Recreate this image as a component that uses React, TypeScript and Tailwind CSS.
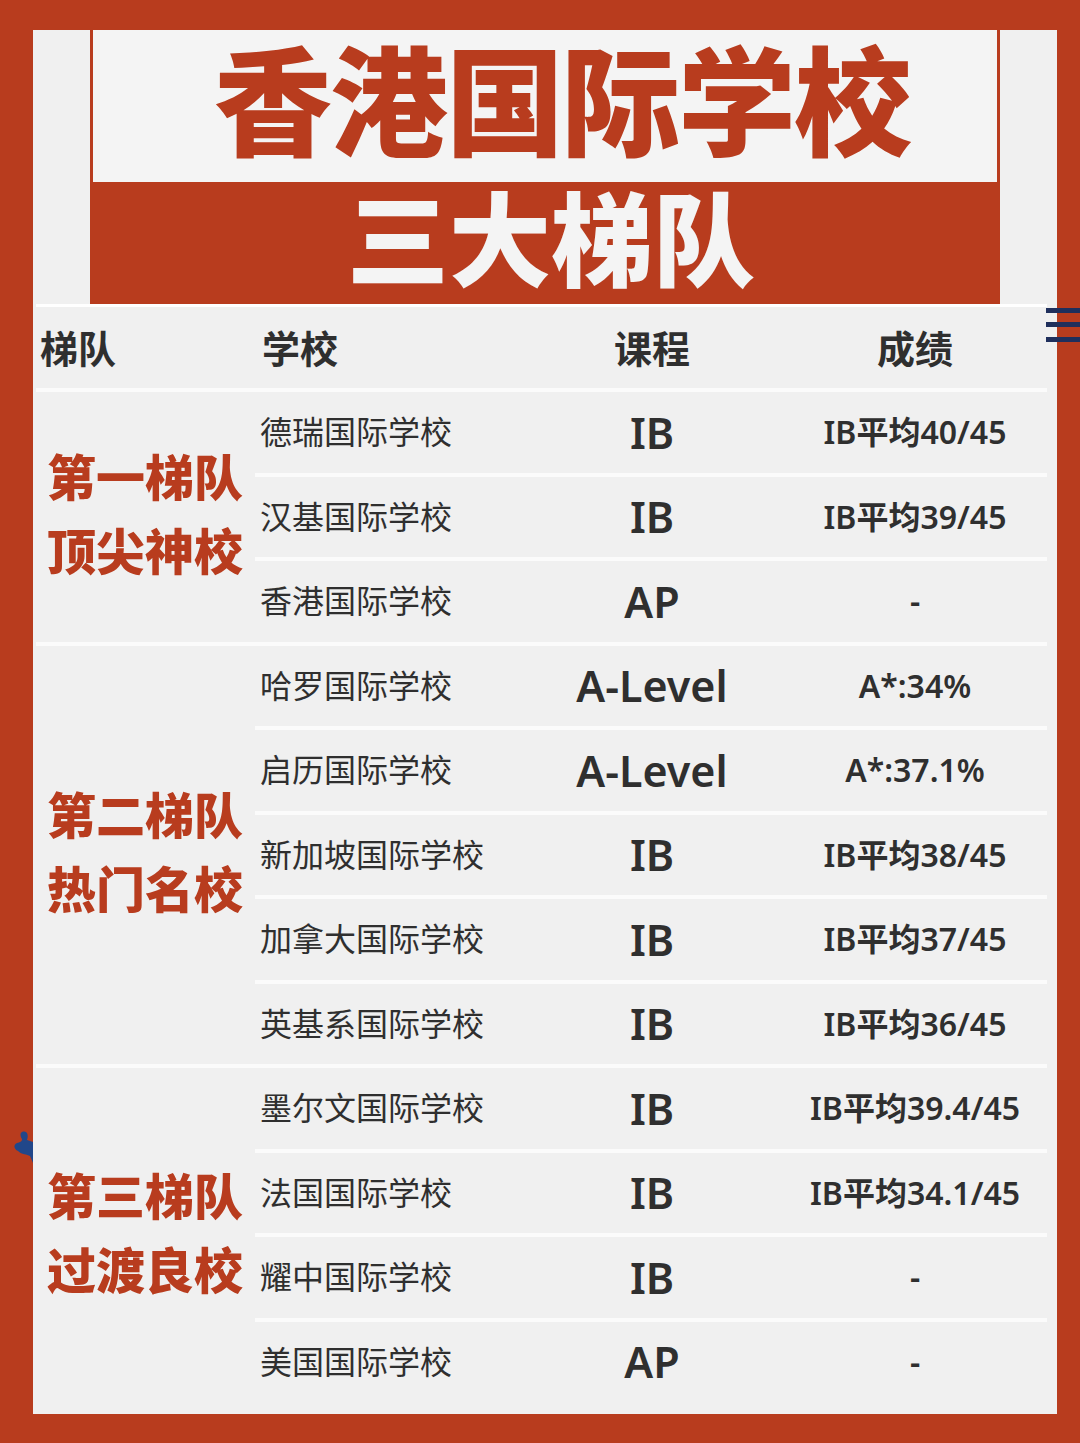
import React from "react";

type Row = [string, string, string];
type Group = { tier: [string, string]; rows: Row[] };

const groups: Group[] = [
  {
    tier: ["第一梯队", "顶尖神校"],
    rows: [
      ["德瑞国际学校", "IB", "IB平均40/45"],
      ["汉基国际学校", "IB", "IB平均39/45"],
      ["香港国际学校", "AP", "-"],
    ],
  },
  {
    tier: ["第二梯队", "热门名校"],
    rows: [
      ["哈罗国际学校", "A-Level", "A*:34%"],
      ["启历国际学校", "A-Level", "A*:37.1%"],
      ["新加坡国际学校", "IB", "IB平均38/45"],
      ["加拿大国际学校", "IB", "IB平均37/45"],
      ["英基系国际学校", "IB", "IB平均36/45"],
    ],
  },
  {
    tier: ["第三梯队", "过渡良校"],
    rows: [
      ["墨尔文国际学校", "IB", "IB平均39.4/45"],
      ["法国国际学校", "IB", "IB平均34.1/45"],
      ["耀中国际学校", "IB", "-"],
      ["美国国际学校", "AP", "-"],
    ],
  },
];

const cjk = "font-['Noto_Sans','Noto_Sans_CJK_SC',sans-serif]";

function SchoolRow({ row }: { row: Row }) {
  const [name, course, score] = row;
  return (
    <div className="flex h-[80.5px] items-center text-[#2f2f2f]">
      <div className="w-[297px] pl-[5px] text-[32px] font-normal leading-none">{name}</div>
      <div className="w-[200px] text-center text-[43px] font-semibold leading-none">{course}</div>
      <div className="w-[295px] pl-[31px] text-center text-[32px] font-semibold leading-none">{score}</div>
    </div>
  );
}

export default function App() {
  return (
    <div className={`relative h-[1443px] w-[1080px] overflow-hidden bg-[#b83c1e] pl-[33px] pt-[30px] ${cjk}`}>
      <div className="flex h-[1384px] w-[1024px] flex-col bg-[#f0f0f0]">
        {/* title block */}
        <div className="flex">
          <div className="w-[57px]" />
          <div className="w-[910px]">
            <div className="flex h-[152px] items-center justify-center border-x-[3px] border-[#b83c1e] bg-[#f4f4f4] pb-[8px] pl-[34px]">
              <h1 className="text-[118px] font-black leading-none tracking-[-2px] text-[#b83c1e]">香港国际学校</h1>
            </div>
            <div className="flex h-[122px] items-center justify-center bg-[#b83c1e] pb-[6px] pl-[12px]">
              <h2 className="text-[102px] font-black leading-none text-[#f4f4f4]">三大梯队</h2>
            </div>
          </div>
        </div>

        {/* table */}
        <div className="ml-[3px] w-[1011px]">
          <div className="h-[3px] bg-white" />
          <div className="flex h-[81px] items-center text-[38px] font-bold leading-none text-[#2f2f2f]">
            <div className="w-[219px] pl-[4px]">梯队</div>
            <div className="w-[297px] pl-[7px]">学校</div>
            <div className="w-[200px] text-center">课程</div>
            <div className="w-[295px] pl-[31px] text-center">成绩</div>
          </div>
          {groups.map((g, gi) => (
            <div key={gi}>
              <div className="h-[4px] bg-[#fbfbfb]" />
              <div className="flex">
                <div className="flex w-[219px] flex-col justify-center gap-[25px] pb-[4px] pl-[11px] text-[49px] font-black leading-none text-[#b83c1e]">
                  <div>{g.tier[0]}</div>
                  <div>{g.tier[1]}</div>
                </div>
                <div className="flex-1">
                  {g.rows.map((r, ri) => (
                    <div key={ri}>
                      {ri > 0 && <div className="h-[4px] bg-[#fbfbfb]" />}
                      <SchoolRow row={r} />
                    </div>
                  ))}
                </div>
              </div>
            </div>
          ))}
        </div>
      </div>

      {/* navy stripes on the right edge */}
      <div className="absolute left-[1046px] top-[308px] flex w-[34px] flex-col">
        <div className="h-[5px] bg-[#1f2f5c]" />
        <div className="mt-[9px] h-[5px] bg-[#1f2f5c]" />
        <div className="mt-[10px] h-[5px] bg-[#1f2f5c]" />
      </div>

      {/* small navy mark on the left edge */}
      <svg className="absolute left-[13px] top-[1130px]" width="22" height="36" viewBox="0 0 22 36">
        <path d="M9 2 C14 0 16 5 14 10 L20 12 L20 33 L17 26 C14 24 9 25 5 21 C1 19 0 15 4 13 C7 12 9 12 9 9 C7 6 7 3 9 2 Z" fill="#21478a" />
      </svg>
    </div>
  );
}
